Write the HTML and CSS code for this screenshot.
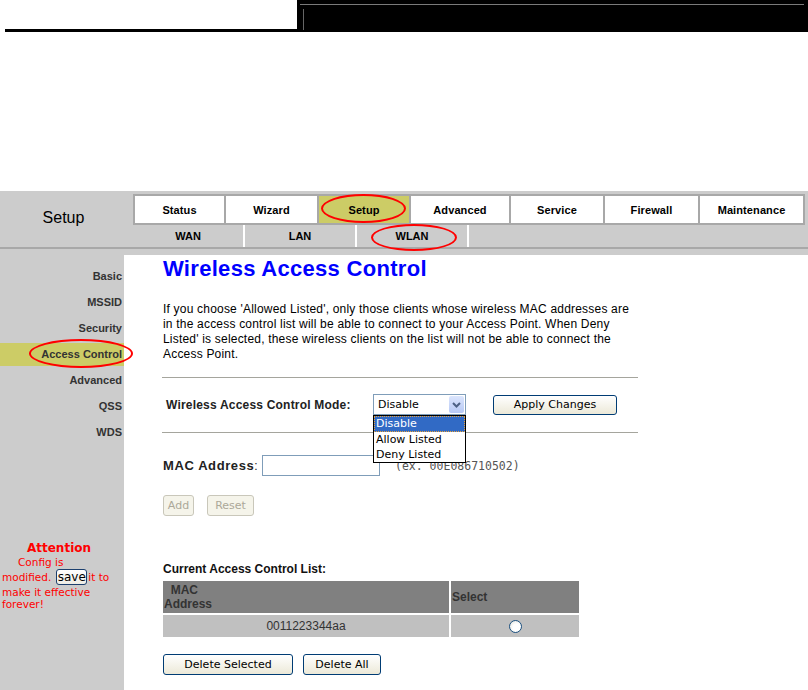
FILE: index.html
```html
<!DOCTYPE html>
<html>
<head>
<meta charset="utf-8">
<title>Wireless Access Control</title>
<link rel="stylesheet" href="styles.css">
</head>
<body>
<div class="topbar">
  <div class="tb-left"></div>
  <div class="tb-right"><div class="tb-inner"><div class="tb-vline"></div></div></div>
</div>
<div class="spacer"></div>
<div class="band">
  <div class="band-main">
    <div class="brand">Setup</div>
    <div class="nav">
      <div class="tabs">
        <div class="tab">Status</div>
        <div class="tab">Wizard</div>
        <div class="tab active">Setup</div>
        <div class="tab">Advanced</div>
        <div class="tab">Service</div>
        <div class="tab">Firewall</div>
        <div class="tab">Maintenance</div>
      </div>
      <div class="subtabs">
        <div class="subtab">WAN</div>
        <div class="subtab">LAN</div>
        <div class="subtab">WLAN</div>
      </div>
    </div>
  </div>
  <div class="band-line"></div>
</div>
<div class="body">
  <div class="sidebar">
    <div class="menu-item">Basic</div>
    <div class="menu-item">MSSID</div>
    <div class="menu-item">Security</div>
    <div class="menu-item active">Access Control</div>
    <div class="menu-item">Advanced</div>
    <div class="menu-item">QSS</div>
    <div class="menu-item">WDS</div>
    <div class="attention">
      <div class="att-title">Attention</div>
      <div class="att-body">
        <div class="indent">Config is</div>
        <div class="att-line">modified. <span class="save-btn">save</span>it to</div>
        <div>make it effective</div>
        <div>forever!</div>
      </div>
    </div>
  </div>
  <div class="main">
    <h1 class="title">Wireless Access Control</h1>
    <p class="intro">If you choose 'Allowed Listed', only those clients whose wireless MAC addresses are<br>in the access control list will be able to connect to your Access Point. When Deny<br>Listed' is selected, these wireless clients on the list will not be able to connect the<br>Access Point.</p>
    <div class="rule rule1"></div>
    <div class="mode-row">
      <div class="mode-label">Wireless Access Control Mode:</div>
      <div class="select">
        <span class="select-text">Disable</span>
        <span class="select-arrow"><svg width="15" height="17" viewBox="0 0 15 17"><path d="M4 7 L7.5 10.5 L11 7" fill="none" stroke="#4d6185" stroke-width="2"/></svg></span>
        <div class="options">
          <div class="option selected">Disable</div>
          <div class="option">Allow Listed</div>
          <div class="option">Deny Listed</div>
        </div>
      </div>
      <span class="btn apply">Apply Changes</span>
    </div>
    <div class="rule rule2"></div>
    <div class="mac-row">
      <div class="mac-label"><b>MAC Address</b>:</div>
      <div class="input"></div>
      <div class="example">(ex. 00E086710502)</div>
    </div>
    <div class="btn-row">
      <span class="btn disabled add">Add</span>
      <span class="btn disabled reset">Reset</span>
    </div>
    <div class="list-title">Current Access Control List:</div>
    <div class="acl">
      <div class="th th-mac">&nbsp;&nbsp;MAC<br>Address</div>
      <div class="th th-sel">Select</div>
      <div class="td td-mac">0011223344aa</div>
      <div class="td td-sel"><span class="radio"></span></div>
    </div>
    <div class="btn-row del-row">
      <span class="btn del-sel">Delete Selected</span>
      <span class="btn del-all">Delete All</span>
    </div>
  </div>
</div>
<div class="mark mark-setup"></div>
<div class="mark mark-wlan"></div>
<div class="mark mark-access"></div>
</body>
</html>
```
FILE: styles.css
```css
* { box-sizing: border-box; }
html, body { margin: 0; padding: 0; background: #fff; }
body {
  width: 808px;
  height: 690px;
  overflow: hidden;
  position: relative;
  font-family: "Liberation Sans", Arial, sans-serif;
  color: #000;
}

/* top bar */
.topbar { display: flex; height: 32px; }
.tb-left { width: 292px; margin-left: 5px; border-bottom: 3px solid #000; }
.tb-right { flex: 1; background: #000; padding: 4px 4px 2px 3px; }
.tb-inner { height: 100%; border-top: 1px solid #7a7a7a; padding: 4px 0 0 3px; }
.tb-vline { width: 1px; height: 21px; background: #666; }

.spacer { height: 159px; }

/* navigation band */
.band { background: #cccccc; padding-top: 3px; }
.band-main { display: flex; }
.brand {
  width: 133px;
  display: flex;
  align-items: center;
  justify-content: center;
  font-size: 16px;
  padding: 0 6px 6px 0;
}
.nav { width: 672px; }
.tabs {
  display: grid;
  grid-template-columns: 89px 91px 90px 98px 92px 93px 103px;
  gap: 2px;
  padding: 2px;
  height: 31px;
  background: #a8a8a8;
}
.tab {
  background: #fff;
  display: flex;
  align-items: center;
  justify-content: center;
  font-weight: bold;
  font-size: 11px;
  letter-spacing: 0.1px;
}
.tab.active { background: #cccc66; }
.subtabs { display: flex; height: 22px; }
.subtab {
  width: 112px;
  border-right: 2px solid #fff;
  display: flex;
  align-items: center;
  justify-content: center;
  font-weight: bold;
  font-size: 11px;
}
.band-line { height: 8px; border-top: 2px solid #a8a8a8; }

/* body */
.body { display: flex; height: 435px; }
.sidebar { width: 124px; background: #cccccc; padding-top: 10px; }
.menu-item {
  height: 23px;
  line-height: 23px;
  margin-bottom: 3px;
  text-align: right;
  padding-right: 2px;
  font-weight: bold;
  font-size: 11px;
  color: #333;
}
.menu-item.active { background: #cccc66; }

.attention {
  margin-top: 98px;
  color: #f00;
  font-family: "DejaVu Sans", sans-serif;
  font-size: 10.5px;
  line-height: 13px;
}
.att-title { text-align: center; font-weight: bold; font-size: 12px; padding-right: 6px; }
.att-body { padding-left: 2px; padding-top: 1px; line-height: 12px; }
.indent { padding-left: 16px; }
.att-line { height: 18px; display: flex; align-items: center; }
.save-btn {
  display: inline-block;
  width: 31px;
  height: 16px;
  line-height: 14px;
  margin: 0 1px 0 5px;
  border: 1px solid #1c3f6e;
  border-radius: 3px;
  background: linear-gradient(#ffffff, #eeede5);
  color: #000;
  font-size: 12px;
  text-align: center;
}

/* main */
.main { flex: 1; padding-left: 39px; padding-top: 2px; }
.title {
  margin: 0;
  font-size: 22px;
  line-height: 24px;
  letter-spacing: 0.3px;
  font-weight: bold;
  color: #0000ff;
}
.intro { margin: 21px 0 0; font-size: 12px; line-height: 15px; letter-spacing: 0.2px; }
.rule { width: 476px; height: 1px; margin-left: -1px; background: #a5a59d; }
.rule1 { margin-top: 15px; }
.rule2 { margin-top: 17px; }

.mode-row { display: flex; align-items: center; height: 21px; margin-top: 16px; }
.mode-label {
  width: 210px;
  padding-left: 3px;
  font-weight: bold;
  font-size: 12px;
  letter-spacing: 0.2px;
  color: #222;
}
.select {
  position: relative;
  width: 93px;
  height: 21px;
  border: 1px solid #7f9db9;
  background: #fff;
  display: flex;
  align-items: center;
  padding-left: 4px;
  font-family: "DejaVu Sans", sans-serif;
  font-size: 11px;
}
.select-arrow {
  margin-left: auto;
  margin-right: 1px;
  width: 15px;
  height: 17px;
  background: linear-gradient(#dbe5fd, #b7c9f5);
  border-radius: 2px;
  display: flex;
}
.options {
  position: absolute;
  left: -1px;
  top: 20px;
  width: 93px;
  border: 1px solid #000;
  background: #fff;
  z-index: 2;
}
.option { height: 15px; line-height: 15px; padding-left: 2px; }
.option.selected {
  height: 16px;
  line-height: 16px;
  background: #316ac5;
  color: #fff;
  outline: 1px dotted #e8a33d;
  outline-offset: -1px;
}

.btn {
  display: inline-flex;
  align-items: center;
  justify-content: center;
  height: 21px;
  border: 1px solid #003c74;
  border-radius: 3px;
  background: linear-gradient(#ffffff, #ece9d8);
  font-family: "DejaVu Sans", sans-serif;
  font-size: 11px;
  color: #000;
}
.apply { width: 124px; height: 20px; margin-left: 27px; }
.btn.disabled { border-color: #c9c7ba; background: #f5f4ea; color: #aca899; }

.mac-row { display: flex; align-items: center; height: 21px; margin-top: 22px; }
.mac-label { width: 99px; font-size: 12px; color: #222; }
.mac-label b { font-size: 13px; letter-spacing: 0.6px; }
.input { width: 118px; height: 21px; border: 1px solid #7f9db9; background: #fff; }
.example {
  margin-left: 15px;
  font-family: "DejaVu Sans Mono", "Liberation Mono", monospace;
  font-size: 11.5px;
  color: #555;
}

.btn-row { display: flex; margin-top: 19px; }
.add { width: 31px; }
.reset { width: 47px; margin-left: 13px; }

.list-title { margin-top: 46px; font-size: 12px; line-height: 15px; font-weight: bold; color: #111; }
.acl {
  display: grid;
  grid-template-columns: 286px 128px;
  gap: 2px;
  margin-top: 4px;
  font-size: 12px;
}
.th {
  background: #808080;
  font-weight: bold;
  color: #333;
  min-height: 32px;
}
.th-mac { line-height: 14px; padding: 2px 0 0 1px; }
.th-sel { display: flex; align-items: center; padding-left: 1px; }
.td {
  background: #c0c0c0;
  height: 22px;
  display: flex;
  align-items: center;
  justify-content: center;
  color: #333;
}
.radio {
  display: inline-block;
  width: 13px;
  height: 13px;
  border: 1px solid #1c5180;
  border-radius: 50%;
  background: radial-gradient(circle at 60% 60%, #ffffff 40%, #dcdcd3);
}

.del-row { margin-top: 17px; }
.del-sel { width: 130px; }
.del-all { width: 78px; margin-left: 10px; }

/* red highlight marks over the screenshot */
.mark {
  position: absolute;
  border: 2px solid #f00;
  border-radius: 50%;
  pointer-events: none;
}
.mark-setup { left: 321px; top: 194px; width: 85px; height: 29px; }
.mark-wlan { left: 371px; top: 224px; width: 86px; height: 27px; }
.mark-access { left: 29px; top: 339px; width: 104px; height: 29px; }
```
